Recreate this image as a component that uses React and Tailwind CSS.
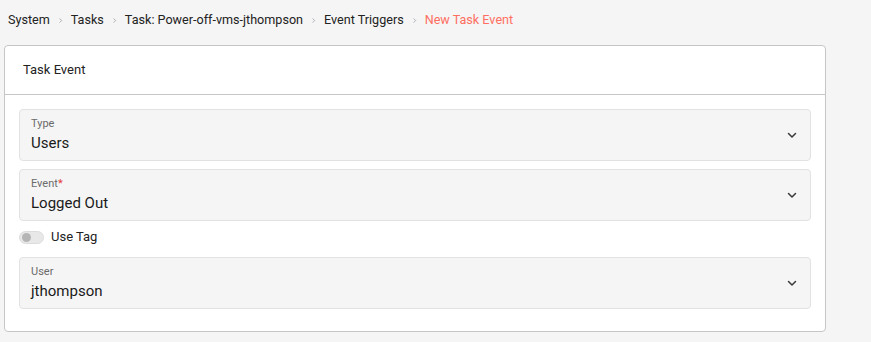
import React from 'react';

const Chevron = () => (
  <svg width="12" height="12" viewBox="0 0 24 24" fill="none" stroke="#3a3a3a" strokeWidth="3" strokeLinecap="round" strokeLinejoin="round">
    <path d="M5 9l7 7 7-7" />
  </svg>
);

const Sep = () => (
  <svg width="7" height="7" viewBox="0 0 24 24" fill="none" stroke="#a0a4aa" strokeWidth="3" className="mx-[7px]">
    <path d="M9 5l7 7-7 7" />
  </svg>
);

const SelectField = ({ label, value, required }) => (
  <div className="flex items-center h-[52px] rounded-[4px] border border-[#e2e2e2] bg-[#f5f5f5] pl-[11px] pr-[12px]">
    <div className="flex-1 flex flex-col">
      <div className="text-[11px] leading-[13px] text-[#6b6b6b] -mt-[1px]">
        {label}
        {required && <span className="text-[#e53935]">*</span>}
      </div>
      <div className="text-[15px] leading-[20px] text-[#1a1a1a] mt-[3px]">{value}</div>
    </div>
    <Chevron />
  </div>
);

const App = () => {
  return (
    <div className="w-[871px] h-[342px] bg-[#f5f5f5] font-['Roboto',sans-serif] overflow-hidden">
      <div className="flex items-center h-[40px] pl-[8px] text-[12.6px] text-[#222]">
        <span>System</span>
        <Sep />
        <span>Tasks</span>
        <Sep />
        <span>Task: Power-off-vms-jthompson</span>
        <Sep />
        <span>Event Triggers</span>
        <Sep />
        <span className="text-[#ff6f61]">New Task Event</span>
      </div>
      <div className="ml-[4px] mt-[5px] w-[822px] h-[287px] bg-white border border-[#c6c6c6] rounded-[4px]">
        <div className="h-[49px] flex items-center pl-[18px] text-[13px] text-[#222] border-b border-[#c6c6c6]">
          Task Event
        </div>
        <div className="px-[14px] pt-[14px] flex flex-col">
          <SelectField label="Type" value="Users" />
          <div className="h-[8px]" />
          <SelectField label="Event" value="Logged Out" required />
          <div className="flex items-center h-[36px] pb-[4px]">
            <div className="w-[25px] h-[13px] rounded-full bg-[#e8e8e8] border border-[#dcdcdc] flex items-center pl-[2px]">
              <div className="w-[9px] h-[9px] rounded-full bg-[#b5b5b5]" />
            </div>
            <span className="ml-[7px] text-[13px] text-[#222]">Use Tag</span>
          </div>
          <SelectField label="User" value="jthompson" />
        </div>
      </div>
    </div>
  );
};

export default App;
